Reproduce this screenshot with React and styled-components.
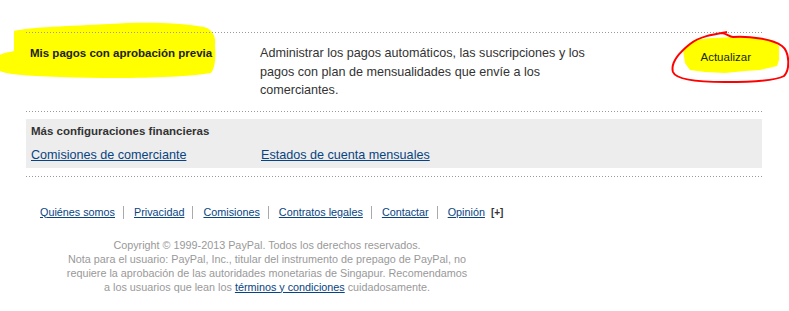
import React from 'react';
import styled, { createGlobalStyle } from 'styled-components';

const GlobalStyle = createGlobalStyle`
  body {
    margin: 0;
    background: #fff;
    font-family: "Liberation Sans", Arial, sans-serif;
    color: #333;
  }
`;

const footerLinks = ['Quiénes somos', 'Privacidad', 'Comisiones', 'Contratos legales', 'Contactar', 'Opinión'];

export default function App() {
  return (
    <StyledPage>
      <GlobalStyle />
      <Highlight width="789" height="311" viewBox="0 0 789 311">
        <path
          fill="#ffff00"
          d="M14 31 C30 27 70 26 110 24 C140 22 175 22 204 27 C214 30 216 38 215 46 C216 58 215 68 211 73 C180 78 120 79 60 77 C25 76 5 74 0 71 L0 55 C5 52 11 52 14 51 Z"
        />
        <path
          fill="#ffff00"
          d="M694 40 L712 38 L735 37 L760 38 L772 40 L779 46 L779 60 L777 66 L760 70 L745 71 L725 73 L705 72 L690 70 L685 63 L683 50 Z"
        />
      </Highlight>
      <Scribble width="789" height="311" viewBox="0 0 789 311">
        <path
          fill="none"
          stroke="#f00"
          strokeWidth="2"
          d="M727 32 C715 34 700 36 690 44 C680 52 670 62 673 72 C676 80 700 82 725 82 C750 82 775 81 784 76 C790 70 790 52 782 46 C772 39 750 36 733 37 C729 37 728 34 722 33"
        />
      </Scribble>

      <Content>
        <Divider />
        <SettingRow>
          <SettingTitle>Mis pagos con aprobación previa</SettingTitle>
          <SettingText>
            Administrar los pagos automáticos, las suscripciones y los pagos con plan de mensualidades que envíe a
            los comerciantes.
          </SettingText>
          <ActionLink href="#">Actualizar</ActionLink>
        </SettingRow>
        <Divider />

        <MoreBox>
          <MoreTitle>Más configuraciones financieras</MoreTitle>
          <MoreLinks>
            <BlueLink href="#">Comisiones de comerciante</BlueLink>
            <BlueLink href="#">Estados de cuenta mensuales</BlueLink>
          </MoreLinks>
        </MoreBox>
        <Divider $top={8} />

        <FooterNav>
          {footerLinks.map((label, i) => (
            <FooterItem key={label} $last={i === footerLinks.length - 1}>
              <FooterLink href="#">{label}</FooterLink>
              {i === footerLinks.length - 1 && <Plus>[+]</Plus>}
            </FooterItem>
          ))}
        </FooterNav>

        <Copyright>
          Copyright © 1999-2013 PayPal. Todos los derechos reservados.
          <br />
          Nota para el usuario: PayPal, Inc., titular del instrumento de prepago de PayPal, no
          <br />
          requiere la aprobación de las autoridades monetarias de Singapur. Recomendamos
          <br />
          a los usuarios que lean los <CopyLink href="#">términos y condiciones</CopyLink> cuidadosamente.
        </Copyright>
      </Content>
    </StyledPage>
  );
}

const StyledPage = styled.div`
  position: relative;
  width: 789px;
  height: 311px;
  overflow: hidden;
`;

const Highlight = styled.svg`
  position: absolute;
  top: 0;
  left: 0;
  z-index: 0;
  pointer-events: none;
`;

const Scribble = styled.svg`
  position: absolute;
  top: 0;
  left: 0;
  z-index: 2;
  pointer-events: none;
`;

const Content = styled.div`
  position: relative;
  z-index: 1;
  width: 736px;
  margin-left: 26px;
  padding-top: 32px;
`;

const Divider = styled.div`
  height: 1px;
  margin-top: ${(props) => props.$top || 0}px;
  background-image: linear-gradient(to right, #999 1px, transparent 1px);
  background-size: 3px 1px;
  background-repeat: repeat-x;
`;

const SettingRow = styled.div`
  display: flex;
  align-items: flex-start;
  padding: 11px 0 11px 4px;
`;

const SettingTitle = styled.div`
  width: 230px;
  font-size: 11.5px;
  font-weight: bold;
  line-height: 18px;
  color: #222;
`;

const SettingText = styled.div`
  width: 340px;
  font-size: 12.6px;
  line-height: 18.5px;
  color: #333;
`;

const ActionLink = styled.a`
  margin-left: auto;
  margin-right: 11px;
  padding-top: 5px;
  font-size: 11.5px;
  line-height: 16px;
  color: #1a2a10;
  text-decoration: none;
`;

const MoreBox = styled.div`
  margin-top: 7px;
  background: #ededed;
  padding: 5px;
  height: 49px;
  box-sizing: border-box;
`;

const MoreTitle = styled.div`
  font-size: 11.5px;
  font-weight: bold;
  line-height: 14px;
  color: #333;
`;

const MoreLinks = styled.div`
  display: grid;
  grid-template-columns: 230px auto;
  margin-top: 9px;
  line-height: 16px;
`;

const BlueLink = styled.a`
  font-size: 12.6px;
  color: #084482;
  text-decoration: underline;
  justify-self: start;
`;

const FooterNav = styled.ul`
  display: flex;
  align-items: center;
  list-style: none;
  margin: 29px 0 0;
  padding: 0 0 0 14px;
`;

const FooterItem = styled.li`
  display: flex;
  align-items: center;
  font-size: 10.8px;
  line-height: 13px;
  padding: 0 ${(props) => (props.$last ? 0 : 8)}px 0 10px;
  border-left: 1px solid #aaa;

  &:first-child {
    padding-left: 0;
    border-left: none;
  }
`;

const FooterLink = styled.a`
  color: #084482;
  text-decoration: underline;
`;

const Plus = styled.span`
  margin-left: 6px;
  font-size: 10px;
  font-weight: bold;
  color: #333;
`;

const Copyright = styled.p`
  width: 482px;
  margin: 19px 0 0;
  text-align: center;
  font-size: 10.8px;
  line-height: 14px;
  color: #999;
`;

const CopyLink = styled.a`
  color: #084482;
  text-decoration: underline;
`;
